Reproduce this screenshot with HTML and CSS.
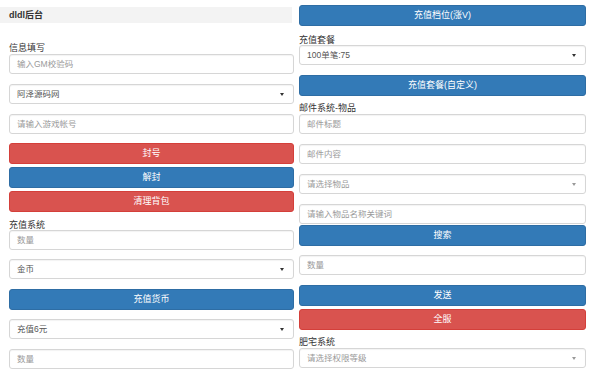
FILE: index.html
```html
<!DOCTYPE html>
<html lang="zh">
<head>
<meta charset="utf-8">
<title>dldl后台</title>
<link rel="stylesheet" href="styles.css">
</head>
<body>
<div class="page">
  <div class="col">
    <div class="header">dldl后台</div>
    <div class="label l-first">信息填写</div>
    <div class="field ph">输入GM校验码</div>
    <div class="field sel mt10">阿泽源码网<span class="caret"></span></div>
    <div class="field ph mt10">请输入游戏帐号</div>
    <div class="btn red mt9">封号</div>
    <div class="btn blue mt3">解封</div>
    <div class="btn red mt3">清理背包</div>
    <div class="label l-charge">充值系统</div>
    <div class="field ph">数量</div>
    <div class="field sel mt9">金币<span class="caret"></span></div>
    <div class="btn blue mt10">充值货币</div>
    <div class="field sel mt9">充值6元<span class="caret"></span></div>
    <div class="field ph mt10">数量</div>
  </div>
  <div class="col">
    <div class="btn blue mt5">充值档位(涨V)</div>
    <div class="label l-pkg">充值套餐</div>
    <div class="field sel">100单笔:75<span class="caret"></span></div>
    <div class="btn blue mt10">充值套餐(自定义)</div>
    <div class="label l-mail">邮件系统-物品</div>
    <div class="field ph">邮件标题</div>
    <div class="field ph mt10">邮件内容</div>
    <div class="field ph sel mt10">请选择物品<span class="caret light"></span></div>
    <div class="field ph mt10">请输入物品名称关键词</div>
    <div class="btn blue mt1">搜索</div>
    <div class="field ph mt9">数量</div>
    <div class="btn blue mt10">发送</div>
    <div class="btn red mt3">全服</div>
    <div class="label l-fat">肥宅系统</div>
    <div class="field ph sel">请选择权限等级<span class="caret light"></span></div>
  </div>
</div>
</body>
</html>
```

FILE: styles.css
```css
html, body {
  margin: 0;
  padding: 0;
  background: #ffffff;
}
body {
  font-family: "Liberation Sans", "Noto Sans CJK SC", sans-serif;
  font-size: 9px;
  color: #333333;
}
.page {
  display: grid;
  grid-template-columns: 285px 287px;
  column-gap: 5px;
  padding: 0 9px 0 9px;
}
.col {
  display: flex;
  flex-direction: column;
}
.header {
  margin: 7px 0 0 -9px;
  padding-left: 9px;
  height: 16px;
  line-height: 16px;
  background: #f3f3f3;
  font-weight: bold;
  font-size: 9px;
  color: #333;
  width: 283px;
}
.label {
  height: 10px;
  line-height: 10px;
  font-size: 9px;
  color: #333;
  margin-bottom: 1px;
}
.l-first { margin-top: 20px; }
.l-charge { margin-top: 8px; margin-bottom: 0; }
.l-pkg { margin-top: 9px; margin-bottom: 0; }
.l-mail { margin-top: 7px; }
.l-fat { margin-top: 7px; }
.field {
  box-sizing: border-box;
  height: 20px;
  line-height: 18px;
  border: 1px solid #d6d6d6;
  border-radius: 3px;
  padding: 0 7px;
  color: #555;
  background: #fff;
  box-shadow: inset 0 1px 1px rgba(0,0,0,0.05);
  position: relative;
  font-size: 8.5px;
}
.field.ph {
  color: #9a9a9a;
}
.caret {
  position: absolute;
  right: 9px;
  top: 8px;
  width: 0;
  height: 0;
  border-left: 2px solid transparent;
  border-right: 2px solid transparent;
  border-top: 3px solid #333;
}
.caret.light {
  border-top-color: #999;
}
.btn {
  box-sizing: border-box;
  height: 21px;
  border-radius: 3px;
  text-align: center;
  color: #fff;
  font-size: 9px;
}
.blue {
  background: #337ab7;
  border: 1px solid #2e6da4;
  line-height: 19px;
}
.red {
  background: #d9534f;
  border: 1px solid #d43f3a;
  line-height: 19px;
}
.mt1 { margin-top: 1px; }
.mt3 { margin-top: 3px; }
.mt5 { margin-top: 5px; }
.mt9 { margin-top: 9px; }
.mt10 { margin-top: 10px; }
```
